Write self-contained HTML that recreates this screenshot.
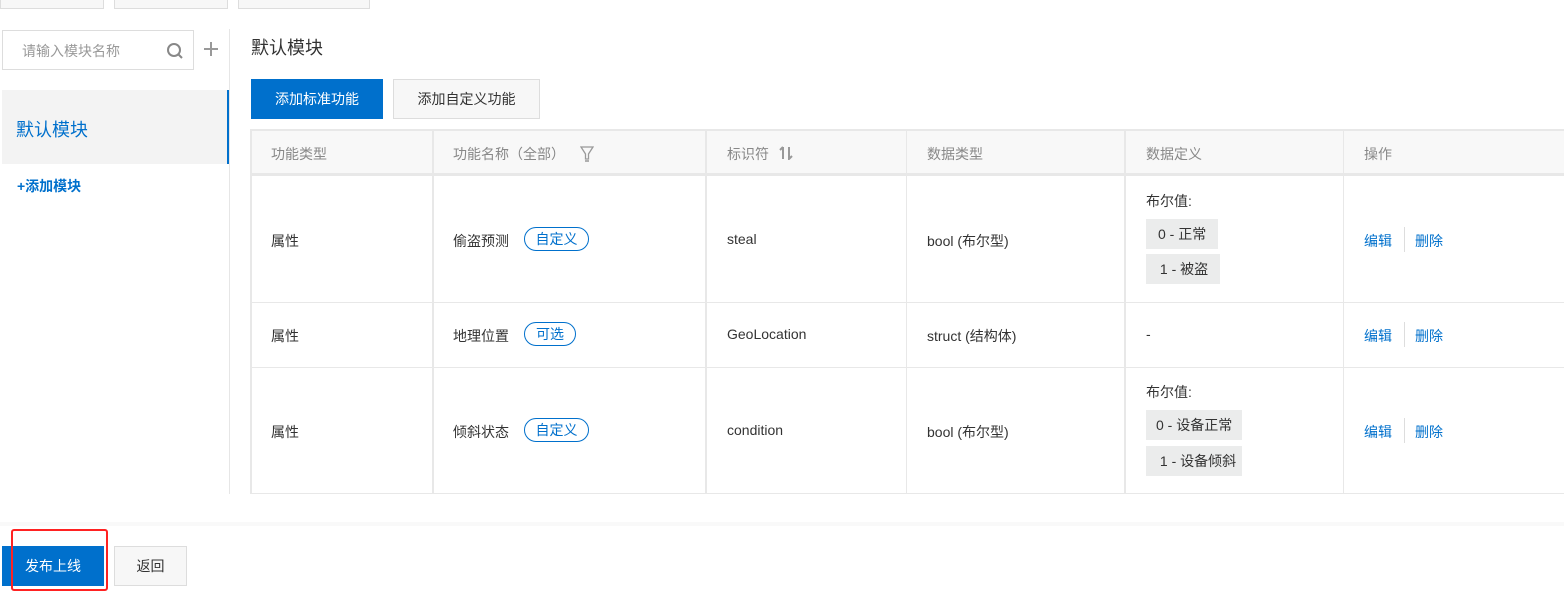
<!DOCTYPE html>
<html><head><meta charset="utf-8"><style>
*{margin:0;padding:0;box-sizing:border-box}
body{width:1564px;height:599px;background:#fff;font-family:"Liberation Sans","Noto Sans CJK SC",sans-serif;font-size:14px;color:#333;position:relative;overflow:hidden}
.a{position:absolute}
.t{position:absolute;white-space:nowrap}
.tag{position:absolute;border:1px solid #0070cc;color:#0070cc;border-radius:12px;height:24px;line-height:22px;padding:0 10px;font-size:14px;min-width:65px;text-align:center}
.tag.s{min-width:52px}
.kv{position:absolute;background:#ebecec;height:30px;line-height:30px;padding:0 10px;font-size:14px;color:#333}
.lnk{color:#0070cc}
</style></head><body>
<div class="a" style="left:0;top:-2px;width:104px;height:11px;border:1px solid #ddd;background:#f7f7f7"></div>
<div class="a" style="left:114px;top:-2px;width:114px;height:11px;border:1px solid #ddd;background:#f7f7f7"></div>
<div class="a" style="left:238px;top:-2px;width:132px;height:11px;border:1px solid #ddd;background:#f7f7f7"></div>

<div class="a" style="left:2px;top:30px;width:192px;height:40px;border:1px solid #ddd"></div>
<div class="t" style="left:22px;top:41px;color:#999;font-size:14px">请输入模块名称</div>
<svg class="a" style="left:166px;top:42px" width="20" height="18" viewBox="0 0 20 18"><circle cx="8" cy="8" r="6" fill="none" stroke="#888" stroke-width="2"/><path d="M12.5 12.5L16 16" stroke="#888" stroke-width="2"/></svg>
<svg class="a" style="left:204px;top:42px" width="14" height="14"><path d="M7 0V14M0 7H14" stroke="#999" stroke-width="2"/></svg>
<div class="a" style="left:229px;top:29px;width:1px;height:465px;background:#e6e6e6"></div>
<div class="a" style="left:2px;top:90px;width:227px;height:74px;background:#f3f3f3;border-right:2px solid #0070cc"></div>
<div class="t" style="left:16px;top:116px;font-size:18px;color:#0070cc">默认模块</div>
<div class="t" style="left:17px;top:176px;font-size:14px;color:#0070cc;font-weight:bold">+添加模块</div>

<div class="t" style="left:251px;top:34px;font-size:18px;color:#333">默认模块</div>
<div class="a" style="left:251px;top:79px;width:132px;height:40px;background:#0070cc;color:#fff;line-height:40px;text-align:center">添加标准功能</div>
<div class="a" style="left:393px;top:79px;width:147px;height:40px;border:1px solid #ddd;background:#f7f7f7;line-height:38px;text-align:center">添加自定义功能</div>

<div class="a" style="left:250px;top:129px;width:1320px;height:47px;background:#f8f8f8;border:2px solid #e8e8e8;border-bottom:3px solid #e8e8e8"></div>
<div class="a" style="left:250px;top:176px;width:2px;height:318px;background:#e8e8e8"></div>
<div class="a" style="left:432px;top:129px;width:2px;height:365px;background:#e8e8e8"></div>
<div class="a" style="left:705px;top:129px;width:2px;height:365px;background:#e8e8e8"></div>
<div class="a" style="left:906px;top:129px;width:1px;height:365px;background:#e8e8e8"></div>
<div class="a" style="left:1124px;top:129px;width:2px;height:365px;background:#e8e8e8"></div>
<div class="a" style="left:1343px;top:129px;width:1px;height:365px;background:#e8e8e8"></div>
<div class="a" style="left:250px;top:302px;width:1320px;height:1px;background:#e8e8e8"></div>
<div class="a" style="left:250px;top:367px;width:1320px;height:1px;background:#e8e8e8"></div>
<div class="a" style="left:250px;top:493px;width:1320px;height:1px;background:#e8e8e8"></div>

<div class="t" style="left:271px;top:144px;color:#888">功能类型</div>
<div class="t" style="left:453px;top:144px;color:#888">功能名称（全部）</div>
<svg class="a" style="left:580px;top:146px" width="14" height="16" viewBox="0 0 14 16"><path d="M1 1H13L8.5 8V13H5.5V8Z" fill="none" stroke="#999" stroke-width="1.3"/><path d="M5 15H9" stroke="#999" stroke-width="1.5"/></svg>
<div class="t" style="left:727px;top:144px;color:#888">标识符</div>
<svg class="a" style="left:779px;top:146px" width="14" height="14" viewBox="0 0 14 14"><path d="M4 1V13M1 4L4 1M10 1V13L13 10" stroke="#999" stroke-width="2" fill="none"/></svg>
<div class="t" style="left:927px;top:144px;color:#888">数据类型</div>
<div class="t" style="left:1146px;top:144px;color:#888">数据定义</div>
<div class="t" style="left:1364px;top:144px;color:#888">操作</div>

<div class="t" style="left:271px;top:231px">属性</div>
<div class="t" style="left:453px;top:231px">偷盗预测</div>
<div class="tag" style="left:524px;top:227px">自定义</div>
<div class="t" style="left:727px;top:231px">steal</div>
<div class="t" style="left:927px;top:231px">bool (布尔型)</div>
<div class="t" style="left:1146px;top:191px">布尔值:</div>
<div class="kv" style="left:1146px;top:219px;padding:0 12px">0 - 正常</div>
<div class="kv" style="left:1146px;top:254px;padding:0 12px 0 10px">&nbsp;1 - 被盗</div>
<div class="t lnk" style="left:1364px;top:231px">编辑</div>
<div class="a" style="left:1404px;top:227px;width:1px;height:25px;background:#ddd"></div>
<div class="t lnk" style="left:1415px;top:231px">删除</div>

<div class="t" style="left:271px;top:326px">属性</div>
<div class="t" style="left:453px;top:326px">地理位置</div>
<div class="tag s" style="left:524px;top:322px">可选</div>
<div class="t" style="left:727px;top:326px">GeoLocation</div>
<div class="t" style="left:927px;top:326px">struct (结构体)</div>
<div class="t" style="left:1146px;top:326px">-</div>
<div class="t lnk" style="left:1364px;top:326px">编辑</div>
<div class="a" style="left:1404px;top:322px;width:1px;height:25px;background:#ddd"></div>
<div class="t lnk" style="left:1415px;top:326px">删除</div>

<div class="t" style="left:271px;top:422px">属性</div>
<div class="t" style="left:453px;top:422px">倾斜状态</div>
<div class="tag" style="left:524px;top:418px">自定义</div>
<div class="t" style="left:727px;top:422px">condition</div>
<div class="t" style="left:927px;top:422px">bool (布尔型)</div>
<div class="t" style="left:1146px;top:382px">布尔值:</div>
<div class="kv" style="left:1146px;top:410px">0 - 设备正常</div>
<div class="kv" style="left:1146px;top:446px;padding:0 6px 0 10px">&nbsp;1 - 设备倾斜</div>
<div class="t lnk" style="left:1364px;top:422px">编辑</div>
<div class="a" style="left:1404px;top:418px;width:1px;height:25px;background:#ddd"></div>
<div class="t lnk" style="left:1415px;top:422px">删除</div>

<div class="a" style="left:0;top:522px;width:1564px;height:4px;background:#f9f9f9"></div>
<div class="a" style="left:2px;top:546px;width:102px;height:40px;background:#0070cc;color:#fff;line-height:40px;text-align:center">发布上线</div>
<div class="a" style="left:114px;top:546px;width:73px;height:40px;border:1px solid #ddd;background:#f7f7f7;line-height:38px;text-align:center">返回</div>
<div class="a" style="left:11px;top:529px;width:97px;height:62px;border:2px solid #f22;border-radius:3px"></div>
</body></html>
